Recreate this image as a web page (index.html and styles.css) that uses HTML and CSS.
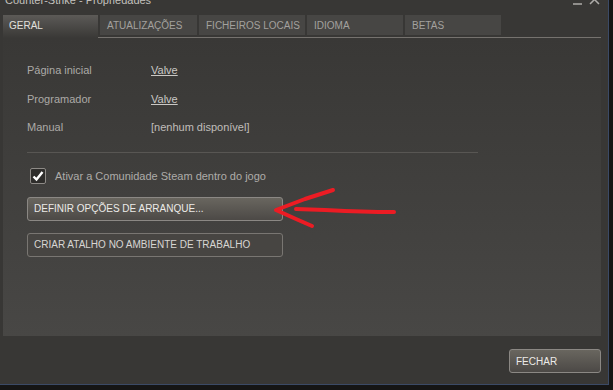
FILE: index.html
```html
<!DOCTYPE html>
<html lang="pt">

<head>
    <meta charset="UTF-8">
    <title>Counter-Strike - Propriedades</title>
    <link rel="stylesheet" href="styles.css">
</head>

<body>
    <div class="window">
        <div class="titlebar">
            <span class="title">Counter-Strike - Propriedades</span>
            <svg class="controls" width="38" height="15" viewBox="0 0 38 15">
                <line x1="3" y1="4" x2="12" y2="4" stroke="#aeaca9" stroke-width="1.5" />
                <line x1="20" y1="-5" x2="29" y2="4" stroke="#aeaca9" stroke-width="1.5" />
                <line x1="29" y1="-5" x2="20" y2="4" stroke="#aeaca9" stroke-width="1.5" />
            </svg>
        </div>

        <div class="tabs">
            <div class="tab active" style="width: 95px">GERAL</div>
            <div class="tab" style="width: 97px">ATUALIZAÇÕES</div>
            <div class="tab" style="width: 106px">FICHEIROS LOCAIS</div>
            <div class="tab" style="width: 96px">IDIOMA</div>
            <div class="tab" style="width: 96px">BETAS</div>
        </div>

        <div class="panel">
            <div class="info-row">
                <span class="label">Página inicial</span>
                <a class="value link">Valve</a>
            </div>
            <div class="info-row">
                <span class="label">Programador</span>
                <a class="value link">Valve</a>
            </div>
            <div class="info-row">
                <span class="label">Manual</span>
                <span class="value">[nenhum disponível]</span>
            </div>

            <div class="separator"></div>

            <label class="check-row">
                <span class="checkbox">
                    <svg width="14" height="14" viewBox="0 0 14 14">
                        <path d="M2.5 7.5 L5.5 10.5 L11.5 3" fill="none" stroke="#ffffff" stroke-width="2.4" />
                    </svg>
                </span>
                Ativar a Comunidade Steam dentro do jogo
            </label>

            <button class="btn btn-light">DEFINIR OPÇÕES DE ARRANQUE...</button>
            <button class="btn btn-dark">CRIAR ATALHO NO AMBIENTE DE TRABALHO</button>
        </div>

        <div class="footer">
            <button class="btn btn-light btn-close">FECHAR</button>
        </div>

        <!-- red arrow drawn on top of the screenshot -->
        <svg class="arrow" width="613" height="390" viewBox="0 0 613 390">
            <g fill="none" stroke="#ec1c24" stroke-width="4" stroke-linecap="round" stroke-linejoin="round">
                <path d="M333 190 L305 199 L276 210 L296 219 L312 226" />
                <path d="M296 209 L325 210 L345 211 L378 212 L394 212" />
            </g>
        </svg>
    </div>
</body>

</html>
```

FILE: styles.css
```css
body {
    margin: 0;
    background-color: #151515;
    font-family: "Liberation Sans", Arial, sans-serif;
}

.window {
    width: 608px;
    height: 384px;
    background-color: #383735;
    border-right: 1px solid #3b4a66;
    border-bottom: 1px solid #3b4a66;
    display: flex;
    flex-direction: column;
}

.titlebar {
    height: 15px;
    display: flex;
    overflow: hidden;
    padding-left: 5px;
}

.title {
    font-size: 11px;
    line-height: 11px;
    margin-top: -5px;
    color: #c3c1be;
}

.controls {
    margin-left: auto;
}

.tabs {
    display: flex;
    align-items: flex-start;
    gap: 2px;
    padding-left: 3px;
    height: 22px;
}

.tab {
    height: 20px;
    line-height: 21px;
    padding-left: 7px;
    box-sizing: border-box;
    font-size: 10px;
    color: #a3a19e;
    background-color: #474644;
}

/* selected tab covers the line under the tab row */
.tab.active {
    position: relative;
    z-index: 1;
    height: 23px;
    margin-bottom: -1px;
    color: #e2e0dd;
    padding-left: 6px;
    background: linear-gradient(#5c5a57, #393836);
}

.panel {
    margin-left: 3px;
    width: 598px;
    height: 299px;
    box-sizing: border-box;
    border-top: 1px solid #75726e;
    padding: 18px 0 0 24px;
    background: linear-gradient(#393836, #484745);
}

.info-row {
    display: flex;
    height: 28.5px;
    align-items: center;
    font-size: 11px;
}

.label {
    width: 124px;
    color: #acaaa7;
}

.value {
    color: #c0beba;
}

.link {
    color: #cac8c5;
    text-decoration: underline;
}

.separator {
    width: 451px;
    height: 1px;
    margin-top: 10px;
    background-color: #585653;
}

.check-row {
    display: flex;
    align-items: center;
    margin-top: 15px;
    font-size: 11px;
    color: #aeaca9;
}

.checkbox {
    width: 14px;
    height: 14px;
    margin: 0 9px 0 3px;
    border: 1px solid #8e8b87;
    border-radius: 2px;
    background-color: #2e2d2b;
    display: flex;
}

.btn {
    display: block;
    width: 256px;
    height: 24px;
    padding: 0 0 0 6px;
    text-align: left;
    font-family: "Liberation Sans", Arial, sans-serif;
    font-size: 10px;
    border-radius: 3px;
    cursor: pointer;
}

.btn-light {
    margin-top: 13px;
    color: #ecebe8;
    border: 1px solid #8b8884;
    background: linear-gradient(#69665f, #4c4946);
}

.btn-dark {
    margin-top: 12px;
    color: #d8d6d3;
    border: 1px solid #797672;
    background-color: #474542;
}

.footer {
    flex: 1;
    display: flex;
    justify-content: flex-end;
    padding-right: 7px;
}

.btn-close {
    width: 92px;
    margin-top: 13px;
}

.arrow {
    position: absolute;
    top: 0;
    left: 0;
    pointer-events: none;
}
```
